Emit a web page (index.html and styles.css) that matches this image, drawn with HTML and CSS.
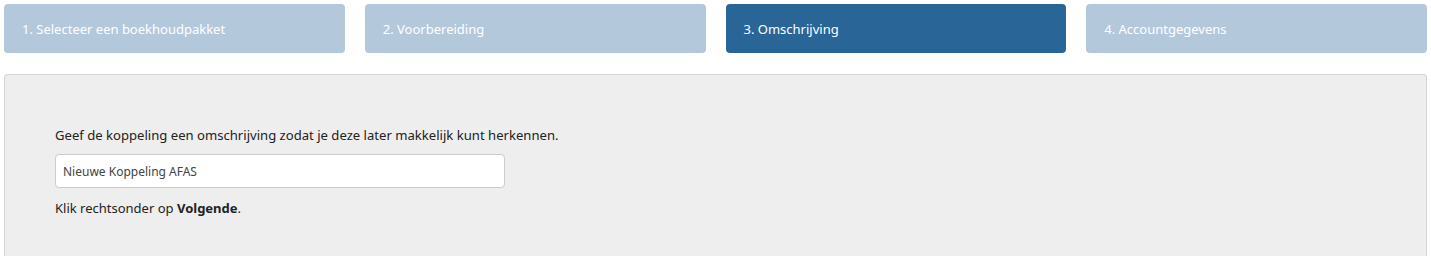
FILE: index.html
```html
<!DOCTYPE html>
<html lang="nl">
  <head>
    <meta charset="utf-8" />
    <link rel="stylesheet" href="styles.css">
  </head>
  <body>
    <!-- Stappen -->
    <div class="steps">
      <div class="step">1. Selecteer een boekhoudpakket</div>
      <div class="step">2. Voorbereiding</div>
      <div class="step active">3. Omschrijving</div>
      <div class="step">4. Accountgegevens</div>
    </div>

    <div class="panel">
      <p class="intro">Geef de koppeling een omschrijving zodat je deze later makkelijk kunt herkennen.</p>
      <input type="text" class="field" value="Nieuwe Koppeling AFAS" />
      <p class="hint">Klik rechtsonder op <b>Volgende</b>.</p>
    </div>
  </body>
</html>
```

FILE: styles.css
```css
html {
  height: 256px;
  overflow: hidden;
}

body {
  margin: 0;
  padding: 4px 4px 0 4px;
  font-family: "Noto Sans", "Open Sans", sans-serif;
  font-size: 13px;
  color: #222;
  background: #fff;
}

.steps {
  display: grid;
  grid-template-columns: repeat(4, 1fr);
  gap: 20px;
}

.step {
  height: 49px;
  display: flex;
  align-items: center;
  padding-left: 18px;
  background: #b4c8dc;
  color: #fff;
  border-radius: 4px;
  font-size: 13px;
}

.step.active {
  background: #2a6598;
}

.panel {
  margin-top: 21px;
  height: 140px;
  background: #eeeeee;
  border: 1px solid #d4d4da;
  border-bottom: none;
  border-radius: 4px 4px 0 0;
  padding: 50px 50px 0 50px;
}

.intro {
  margin: 0 0 9px 0;
  line-height: 20px;
  font-size: 13.1px;
}

.field {
  display: block;
  width: 450px;
  height: 34px;
  box-sizing: border-box;
  padding: 0 7px;
  border: 1px solid #ccc;
  border-radius: 4px;
  background: #fff;
  font-family: inherit;
  font-size: 12px;
  color: #444;
}

.hint {
  margin: 10px 0 0 0;
  line-height: 20px;
}
```
